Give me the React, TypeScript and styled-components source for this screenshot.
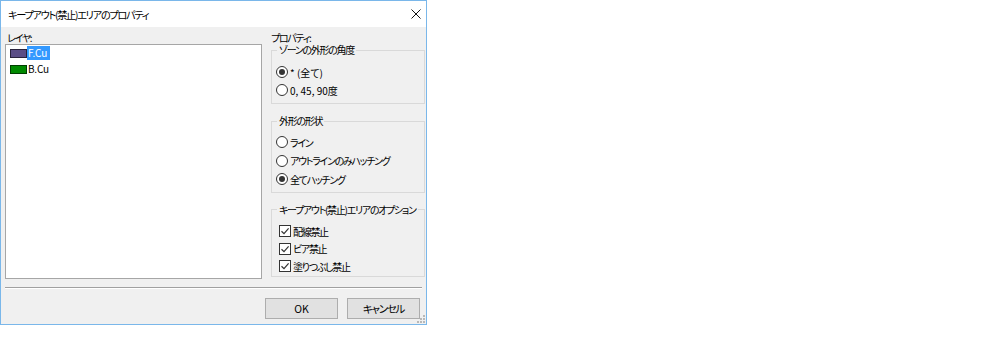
import React from "react";
import styled, { createGlobalStyle } from "styled-components";

const Global = createGlobalStyle`
  html, body { margin: 0; padding: 0; background: #ffffff; }
  body {
    font-family: "Noto Sans CJK JP", "Noto Sans", sans-serif;
    font-size: 10px;
    letter-spacing: -1.3px;
    color: #000;
    font-feature-settings: "palt";
  }
`;

const Window = styled.div`
  position: relative;
  width: 427px;
  height: 325px;
  box-sizing: border-box;
  border: 1px solid #7ab7ea;
  background: #f0f0f0;
  display: flex;
  flex-direction: column;
`;

const TitleBar = styled.div`
  flex: none;
  height: 26px;
  background: #ffffff;
  display: flex;
  align-items: center;
  justify-content: space-between;
  padding: 0 5px 0 7px;
`;

const TitleText = styled.span`
  font-size: 10.2px;
  line-height: 12px;
  margin-top: 1px;
  white-space: nowrap;
`;

const CloseIcon = styled.svg`
  width: 10px;
  height: 10px;
  margin-top: -1px;
`;

const Body = styled.div`
  flex: 1;
  display: flex;
  flex-direction: column;
  padding: 4px 1px 0 4px;
`;

const Main = styled.div`
  display: flex;
  gap: 9px;
  height: 248px;
`;

const LeftCol = styled.div`
  width: 257px;
  display: flex;
  flex-direction: column;
`;

const RightCol = styled.div`
  width: 154px;
  display: flex;
  flex-direction: column;
`;

const Label = styled.div<{ $pl?: number }>`
  line-height: 11px;
  height: 11px;
  margin: 1px 0 1px 0;
  padding-left: ${(p) => p.$pl ?? 0}px;
  white-space: nowrap;
`;

const ListBox = styled.div`
  height: 235px;
  box-sizing: border-box;
  background: #ffffff;
  border: 1px solid #a6a6a6;
  padding: 3px 4px;
  display: flex;
  flex-direction: column;
`;

const LayerRow = styled.div`
  height: 16px;
  display: flex;
  align-items: flex-start;
`;

const Swatch = styled.span<{ $c: string }>`
  width: 17px;
  height: 9px;
  margin-top: 1px;
  box-sizing: border-box;
  background: ${(p) => p.$c};
  border: 1px solid rgba(0, 0, 0, 0.55);
`;

const LayerName = styled.span<{ $sel?: boolean }>`
  line-height: 14px;
  padding: 0 3px 0 1px;
  margin-top: -2px;
  letter-spacing: -0.2px;
  background: ${(p) => (p.$sel ? "#3399ff" : "transparent")};
  color: ${(p) => (p.$sel ? "#ffffff" : "#000000")};
`;

const Group = styled.fieldset<{ $pt: number; $pb: number }>`
  margin: 0 0 11px 0;
  padding: ${(p) => p.$pt}px 4px ${(p) => p.$pb}px 4px;
  border: 1px solid #d9d9d9;
  min-width: 0;
  display: flex;
  flex-direction: column;
`;

const Legend = styled.legend`
  padding: 0 2px;
  margin-left: 1px;
  line-height: 12px;
  white-space: nowrap;
`;

const OptionRow = styled.div<{ $h: number; $indent?: number }>`
  height: ${(p) => p.$h}px;
  display: flex;
  align-items: center;
  gap: 2px;
  padding-left: ${(p) => p.$indent ?? 0}px;
  white-space: nowrap;
`;

const Radio = styled.span<{ $on?: boolean }>`
  flex: none;
  width: 12px;
  height: 12px;
  box-sizing: border-box;
  border-radius: 50%;
  border: 1px solid #333333;
  background: #ffffff;
  display: flex;
  align-items: center;
  justify-content: center;
  &::after {
    content: "";
    width: 6px;
    height: 6px;
    border-radius: 50%;
    background: ${(p) => (p.$on ? "#333333" : "transparent")};
  }
`;

const CheckBox = styled.span`
  flex: none;
  width: 12px;
  height: 12px;
  box-sizing: border-box;
  border: 1px solid #333333;
  background: #ffffff;
  display: flex;
  align-items: center;
  justify-content: center;
`;

const OptText = styled.span<{ $latin?: boolean }>`
  line-height: 13px;
  letter-spacing: ${(p) => (p.$latin ? "0px" : "inherit")};
`;

const Separator = styled.div`
  margin: 8px 3px 0 0;
  border-top: 1px solid #a0a0a0;
  border-bottom: 1px solid #ffffff;
`;

const ButtonRow = styled.div`
  display: flex;
  justify-content: flex-end;
  gap: 9px;
  padding: 9px 5px 0 0;
`;

const Button = styled.button<{ $latin?: boolean }>`
  width: 73px;
  height: 21px;
  box-sizing: border-box;
  border: 1px solid #adadad;
  background: #e1e1e1;
  font-family: inherit;
  font-size: 10.5px;
  letter-spacing: ${(p) => (p.$latin ? "0px" : "-1.3px")};
  font-feature-settings: "palt";
  color: #000;
  padding: 0;
  line-height: 13px;
`;

const Grip = styled.svg`
  position: absolute;
  right: 1px;
  bottom: 1px;
  width: 8px;
  height: 8px;
`;

const Check = () => (
  <svg width="10" height="10" viewBox="0 0 10 10">
    <path d="M1.5 5.2 L4 7.6 L8.6 2.4" fill="none" stroke="#333" strokeWidth="1.2" />
  </svg>
);

export default function App() {
  return (
    <>
      <Global />
      <Window>
        <TitleBar>
          <TitleText>キープアウト(禁止)エリアのプロパティ</TitleText>
          <CloseIcon viewBox="0 0 10 10">
            <path d="M0.5 0.5 L9.5 9.5 M9.5 0.5 L0.5 9.5" stroke="#111" strokeWidth="1" fill="none" />
          </CloseIcon>
        </TitleBar>
        <Body>
          <Main>
            <LeftCol>
              <Label $pl={2}>レイヤ:</Label>
              <ListBox>
                <LayerRow>
                  <Swatch $c="#5a4d86" />
                  <LayerName $sel>F.Cu</LayerName>
                </LayerRow>
                <LayerRow>
                  <Swatch $c="#008a00" />
                  <LayerName>B.Cu</LayerName>
                </LayerRow>
              </ListBox>
            </LeftCol>
            <RightCol>
              <Label>プロパティ:</Label>
              <Group $pt={7} $pb={4}>
                <Legend>ゾーンの外形の角度</Legend>
                <OptionRow $h={18}>
                  <Radio $on />
                  <OptText $latin>* (全て)</OptText>
                </OptionRow>
                <OptionRow $h={18}>
                  <Radio />
                  <OptText $latin>0, 45, 90度</OptText>
                </OptionRow>
              </Group>
              <Group $pt={6} $pb={3}>
                <Legend>外形の形状</Legend>
                <OptionRow $h={18.5}>
                  <Radio />
                  <OptText>ライン</OptText>
                </OptionRow>
                <OptionRow $h={18.5}>
                  <Radio />
                  <OptText>アウトラインのみハッチング</OptText>
                </OptionRow>
                <OptionRow $h={18.5}>
                  <Radio $on />
                  <OptText>全てハッチング</OptText>
                </OptionRow>
              </Group>
              <Group $pt={7} $pb={1}>
                <Legend>キープアウト(禁止)エリアのオプション</Legend>
                <OptionRow $h={17.5} $indent={3}>
                  <CheckBox>
                    <Check />
                  </CheckBox>
                  <OptText>配線禁止</OptText>
                </OptionRow>
                <OptionRow $h={17.5} $indent={3}>
                  <CheckBox>
                    <Check />
                  </CheckBox>
                  <OptText>ビア禁止</OptText>
                </OptionRow>
                <OptionRow $h={17.5} $indent={3}>
                  <CheckBox>
                    <Check />
                  </CheckBox>
                  <OptText>塗りつぶし禁止</OptText>
                </OptionRow>
              </Group>
            </RightCol>
          </Main>
          <Separator />
          <ButtonRow>
            <Button $latin>OK</Button>
            <Button>キャンセル</Button>
          </ButtonRow>
        </Body>
        <Grip viewBox="0 0 8 8">
          {[
            [6, 0],
            [6, 3],
            [3, 3],
            [6, 6],
            [3, 6],
            [0, 6],
          ].map(([x, y], i) => (
            <rect key={i} x={x} y={y} width="2" height="2" fill="#b8b8b8" />
          ))}
        </Grip>
      </Window>
    </>
  );
}
